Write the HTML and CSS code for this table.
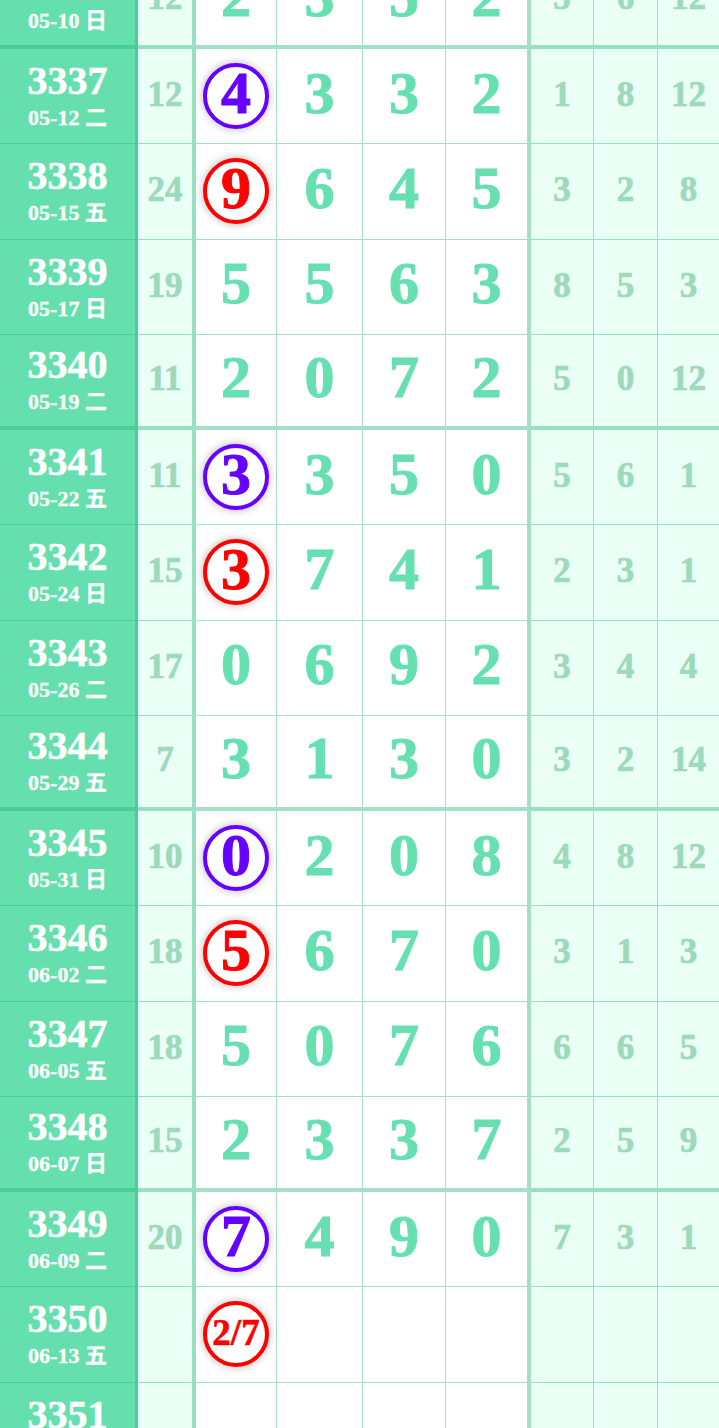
FILE: index.html
```html
<!DOCTYPE html>
<html lang="zh">
<head>
  <meta charset="UTF-8">
  <meta name="viewport" content="width=device-width, initial-scale=1.0">
  <title>走势图</title>
  <link rel="stylesheet" href="styles.css">
</head>
<body>
  <div class="chart">
    <div class="row sep">
      <div class="no"><span class="qi">3336</span><span class="date">05-10 日</span></div>
      <div class="sum">12</div>
      <div class="d">2</div>
      <div class="d">3</div>
      <div class="d">5</div>
      <div class="d end">2</div>
      <div class="s">5</div>
      <div class="s">6</div>
      <div class="s">12</div>
    </div>
    <div class="row">
      <div class="no"><span class="qi">3337</span><span class="date">05-12 二</span></div>
      <div class="sum">12</div>
      <div class="d"><span class="ball blue">4</span></div>
      <div class="d">3</div>
      <div class="d">3</div>
      <div class="d end">2</div>
      <div class="s">1</div>
      <div class="s">8</div>
      <div class="s">12</div>
    </div>
    <div class="row">
      <div class="no"><span class="qi">3338</span><span class="date">05-15 五</span></div>
      <div class="sum">24</div>
      <div class="d"><span class="ball red">9</span></div>
      <div class="d">6</div>
      <div class="d">4</div>
      <div class="d end">5</div>
      <div class="s">3</div>
      <div class="s">2</div>
      <div class="s">8</div>
    </div>
    <div class="row">
      <div class="no"><span class="qi">3339</span><span class="date">05-17 日</span></div>
      <div class="sum">19</div>
      <div class="d">5</div>
      <div class="d">5</div>
      <div class="d">6</div>
      <div class="d end">3</div>
      <div class="s">8</div>
      <div class="s">5</div>
      <div class="s">3</div>
    </div>
    <div class="row sep">
      <div class="no"><span class="qi">3340</span><span class="date">05-19 二</span></div>
      <div class="sum">11</div>
      <div class="d">2</div>
      <div class="d">0</div>
      <div class="d">7</div>
      <div class="d end">2</div>
      <div class="s">5</div>
      <div class="s">0</div>
      <div class="s">12</div>
    </div>
    <div class="row">
      <div class="no"><span class="qi">3341</span><span class="date">05-22 五</span></div>
      <div class="sum">11</div>
      <div class="d"><span class="ball blue">3</span></div>
      <div class="d">3</div>
      <div class="d">5</div>
      <div class="d end">0</div>
      <div class="s">5</div>
      <div class="s">6</div>
      <div class="s">1</div>
    </div>
    <div class="row">
      <div class="no"><span class="qi">3342</span><span class="date">05-24 日</span></div>
      <div class="sum">15</div>
      <div class="d"><span class="ball red">3</span></div>
      <div class="d">7</div>
      <div class="d">4</div>
      <div class="d end">1</div>
      <div class="s">2</div>
      <div class="s">3</div>
      <div class="s">1</div>
    </div>
    <div class="row">
      <div class="no"><span class="qi">3343</span><span class="date">05-26 二</span></div>
      <div class="sum">17</div>
      <div class="d">0</div>
      <div class="d">6</div>
      <div class="d">9</div>
      <div class="d end">2</div>
      <div class="s">3</div>
      <div class="s">4</div>
      <div class="s">4</div>
    </div>
    <div class="row sep">
      <div class="no"><span class="qi">3344</span><span class="date">05-29 五</span></div>
      <div class="sum">7</div>
      <div class="d">3</div>
      <div class="d">1</div>
      <div class="d">3</div>
      <div class="d end">0</div>
      <div class="s">3</div>
      <div class="s">2</div>
      <div class="s">14</div>
    </div>
    <div class="row">
      <div class="no"><span class="qi">3345</span><span class="date">05-31 日</span></div>
      <div class="sum">10</div>
      <div class="d"><span class="ball blue">0</span></div>
      <div class="d">2</div>
      <div class="d">0</div>
      <div class="d end">8</div>
      <div class="s">4</div>
      <div class="s">8</div>
      <div class="s">12</div>
    </div>
    <div class="row">
      <div class="no"><span class="qi">3346</span><span class="date">06-02 二</span></div>
      <div class="sum">18</div>
      <div class="d"><span class="ball red">5</span></div>
      <div class="d">6</div>
      <div class="d">7</div>
      <div class="d end">0</div>
      <div class="s">3</div>
      <div class="s">1</div>
      <div class="s">3</div>
    </div>
    <div class="row">
      <div class="no"><span class="qi">3347</span><span class="date">06-05 五</span></div>
      <div class="sum">18</div>
      <div class="d">5</div>
      <div class="d">0</div>
      <div class="d">7</div>
      <div class="d end">6</div>
      <div class="s">6</div>
      <div class="s">6</div>
      <div class="s">5</div>
    </div>
    <div class="row sep">
      <div class="no"><span class="qi">3348</span><span class="date">06-07 日</span></div>
      <div class="sum">15</div>
      <div class="d">2</div>
      <div class="d">3</div>
      <div class="d">3</div>
      <div class="d end">7</div>
      <div class="s">2</div>
      <div class="s">5</div>
      <div class="s">9</div>
    </div>
    <div class="row">
      <div class="no"><span class="qi">3349</span><span class="date">06-09 二</span></div>
      <div class="sum">20</div>
      <div class="d"><span class="ball blue">7</span></div>
      <div class="d">4</div>
      <div class="d">9</div>
      <div class="d end">0</div>
      <div class="s">7</div>
      <div class="s">3</div>
      <div class="s">1</div>
    </div>
    <div class="row">
      <div class="no"><span class="qi">3350</span><span class="date">06-13 五</span></div>
      <div class="sum"></div>
      <div class="d"><span class="ball red small">2/7</span></div>
      <div class="d"></div>
      <div class="d"></div>
      <div class="d end"></div>
      <div class="s"></div>
      <div class="s"></div>
      <div class="s"></div>
    </div>
    <div class="row">
      <div class="no"><span class="qi">3351</span><span class="date">06-16 二</span></div>
      <div class="sum"></div>
      <div class="d"></div>
      <div class="d"></div>
      <div class="d"></div>
      <div class="d end"></div>
      <div class="s"></div>
      <div class="s"></div>
      <div class="s"></div>
    </div>
  </div>
</body>
</html>
```

FILE: styles.css
```css
body {
  margin: 0;
  background-color: #fff;
  font-family: "Liberation Serif", "Noto Sans CJK SC", serif;
  font-weight: bold;
  overflow: hidden;
}

.chart {
  margin-top: -46.25px;
}

.row {
  display: grid;
  grid-template-columns: 138px 58px 81px 86px 83px 85px 63px 64px 61px;
  height: 95.25px;
}

.row > div {
  display: flex;
  align-items: center;
  justify-content: center;
  border-right: 1px solid rgba(40, 180, 120, 0.42);
  border-bottom: 1px solid rgba(40, 180, 120, 0.42);
}

.row.sep > div {
  border-bottom-width: 4px;
}

.row > div:last-child {
  border-right: none;
}

/* period column */
.no {
  flex-direction: column;
  background-color: #66dfae;
  color: #fff;
  border-right-width: 3px !important;
}

.qi {
  font-size: 40px;
  line-height: 40px;
  -webkit-text-stroke: 0.6px #fff;
}

.date {
  margin-top: 4px;
  font-size: 22px;
  line-height: 26px;
  -webkit-text-stroke: 0.3px #fff;
}

.sum,
.s {
  background-color: #eafff5;
  color: #9dd9bb;
  font-size: 35px;
  line-height: 1;
  padding-bottom: 3px;
  -webkit-text-stroke: 0.7px #9dd9bb;
}

.sum {
  border-right-width: 4px !important;
}

.d {
  background-color: #fff;
  color: #66e0b0;
  font-size: 60px;
  line-height: 1;
  padding-bottom: 7px;
  -webkit-text-stroke: 1px #66e0b0;
}

.d.end {
  border-right-width: 4px !important;
}

.d:has(.ball) {
  padding-bottom: 0;
}

.ball {
  box-sizing: border-box;
  width: 66px;
  height: 66px;
  border: 4px solid;
  border-radius: 50%;
  background-color: #fff;
  box-shadow: 0 0 8px rgba(0, 0, 0, 0.3);
  display: flex;
  align-items: center;
  justify-content: center;
  padding-bottom: 7px;
}

.ball.blue {
  color: #6600ff;
  border-color: #6600ff;
  -webkit-text-stroke: 1px #6600ff;
}

.ball.red {
  color: #ff0000;
  border-color: #ff0000;
  -webkit-text-stroke: 1px #ff0000;
}

.ball.small {
  font-size: 37px;
  padding-bottom: 3px;
  -webkit-text-stroke: 0.6px #ff0000;
}
```
